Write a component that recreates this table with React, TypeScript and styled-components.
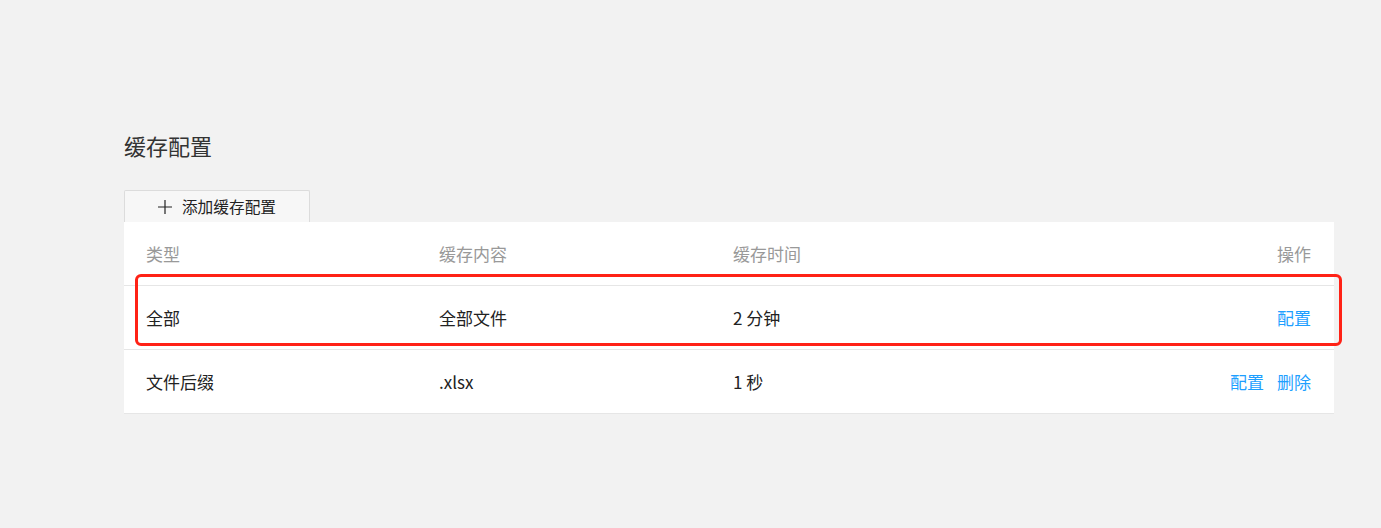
import React from 'react';
import styled, {createGlobalStyle} from 'styled-components';

const GlobalStyle = createGlobalStyle`
  html, body {
    margin: 0;
    padding: 0;
    background: #f2f2f2;
    font-family: "Noto Sans CJK SC", "Noto Sans", sans-serif;
  }
`;

const Page = styled.div`
  min-height: 528px;
  padding: 130px 47px 0 124px;
  box-sizing: border-box;
`;

const Title = styled.h2`
  margin: 0 0 29px;
  font-size: 22px;
  line-height: 31px;
  font-weight: 400;
  color: #333;
`;

const AddButton = styled.button`
  display: flex;
  align-items: center;
  justify-content: center;
  gap: 10px;
  width: 186px;
  height: 32px;
  padding: 0;
  border: 1px solid #dcdcdc;
  border-bottom: none;
  border-radius: 2px 2px 0 0;
  background: #f7f7f7;
  font-family: inherit;
  font-size: 15.7px;
  color: #222;
  cursor: pointer;
`;

const Table = styled.div`
  position: relative;
  background: #fff;
`;

const Row = styled.div<{$head?: boolean}>`
  display: grid;
  grid-template-columns: 293px 294px 1fr auto;
  align-items: center;
  height: 64px;
  padding: 0 23px 0 22px;
  border-bottom: 1px solid #e6e6e6;
  box-sizing: border-box;
  font-size: 17px;
  color: ${p => (p.$head ? '#999' : '#222')};
`;

const Actions = styled.div`
  display: flex;
  gap: 13px;
  justify-content: flex-end;
`;

const LinkAction = styled.a`
  color: #1e9fff;
  text-decoration: none;
  cursor: pointer;
`;

const Highlight = styled.div`
  position: absolute;
  left: 11px;
  top: 52px;
  width: 1207px;
  height: 72px;
  border: 3px solid #ff2216;
  border-radius: 6px;
  box-sizing: border-box;
  pointer-events: none;
`;

const rows = [
  {type: '全部', content: '全部文件', time: '2 分钟', canDelete: false},
  {type: '文件后缀', content: '.xlsx', time: '1 秒', canDelete: true},
];

function PlusIcon() {
  return (
    <svg width="14" height="14" viewBox="0 0 14 14">
      <path d="M7 0v14M0 7h14" stroke="#222" strokeWidth="1.2" fill="none" />
    </svg>
  );
}

export default function App() {
  return (
    <>
      <GlobalStyle />
      <Page>
        <Title>缓存配置</Title>
        <AddButton>
          <PlusIcon />
          添加缓存配置
        </AddButton>
        <Table>
          <Row $head>
            <div>类型</div>
            <div>缓存内容</div>
            <div>缓存时间</div>
            <Actions>操作</Actions>
          </Row>
          {rows.map(r => (
            <Row key={r.type}>
              <div>{r.type}</div>
              <div>{r.content}</div>
              <div>{r.time}</div>
              <Actions>
                <LinkAction>配置</LinkAction>
                {r.canDelete && <LinkAction>删除</LinkAction>}
              </Actions>
            </Row>
          ))}
          <Highlight />
        </Table>
      </Page>
    </>
  );
}
